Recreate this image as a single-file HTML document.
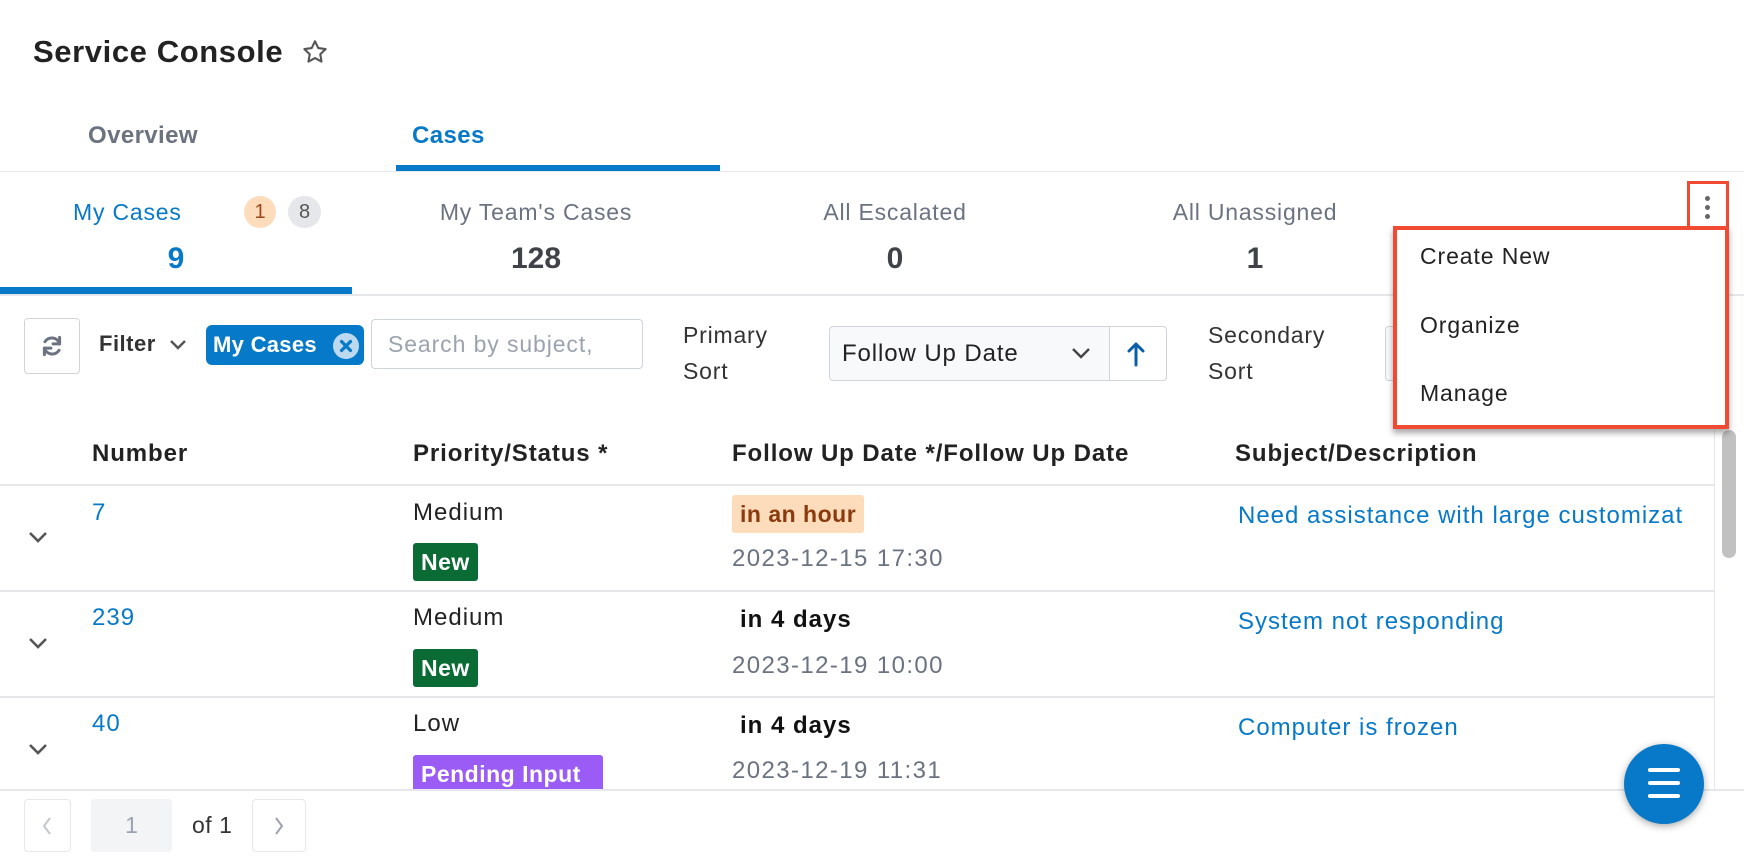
<!DOCTYPE html>
<html><head><meta charset="utf-8"><style>
*{margin:0;padding:0;box-sizing:border-box}
body{width:1744px;height:862px;background:#fff;font-family:"Liberation Sans",Arial,sans-serif;position:relative;overflow:hidden;color:#222}
.a{position:absolute;white-space:nowrap}
.hl{position:absolute;height:1px;background:#e5e7eb}
.lbl{font-size:23px;line-height:26px;color:#6b7280;letter-spacing:.8px}
.num{font-size:30px;line-height:34px;font-weight:bold;color:#3f4348}
.th{font-size:24px;font-weight:bold;line-height:28px;color:#222;letter-spacing:.9px}
.td{font-size:24px;line-height:28px;color:#222;letter-spacing:1px}
.blue{color:#0679c8}
.date{font-size:24px;line-height:28px;color:#6b7280;letter-spacing:1.4px}
.badge{position:absolute;color:#fff;font-weight:bold;font-size:23px;line-height:38px;padding:0 8px;border-radius:3px;letter-spacing:.5px}
.chev{position:absolute;left:28px;width:20px;height:12px}
.mi{font-size:23px;line-height:26px;color:#222;letter-spacing:.9px}
</style></head><body>

<div class="a" style="left:33px;top:33px;font-size:31px;line-height:38px;font-weight:bold;color:#222;letter-spacing:.6px">Service Console</div>
<svg class="a" style="left:301px;top:38px" width="28" height="28" viewBox="0 0 24 24"><path d="M12 2.8l2.8 5.8 6.3.9-4.6 4.4 1.1 6.3L12 17.2l-5.6 3 1.1-6.3-4.6-4.4 6.3-.9z" fill="none" stroke="#555" stroke-width="1.8" stroke-linejoin="round"/></svg>

<div class="a" style="left:88px;top:122px;font-size:24px;line-height:28px;font-weight:bold;color:#6b7280;letter-spacing:.4px">Overview</div>
<div class="a" style="left:412px;top:122px;font-size:24px;line-height:28px;font-weight:bold;color:#0679c8;letter-spacing:.4px">Cases</div>
<div class="hl" style="left:0;top:171px;width:1744px"></div>
<div class="a" style="left:396px;top:165px;width:324px;height:6px;background:#0679c8"></div>

<div class="a lbl" style="left:73px;top:199px;color:#0679c8">My Cases</div>
<div class="a" style="left:244px;top:196px;width:32px;height:32px;border-radius:16px;background:#fddcbc;color:#9a4a1a;font-size:20px;line-height:32px;text-align:center">1</div>
<div class="a" style="left:288px;top:196px;width:33px;height:32px;border-radius:16px;background:#e5e7eb;color:#555;font-size:20px;line-height:32px;text-align:center">8</div>
<div class="a num" style="left:126px;width:100px;text-align:center;top:242px;color:#0679c8">9</div>
<div class="a lbl" style="left:386px;width:300px;text-align:center;top:199px">My Team's Cases</div>
<div class="a num" style="left:486px;width:100px;text-align:center;top:242px">128</div>
<div class="a lbl" style="left:745px;width:300px;text-align:center;top:199px">All Escalated</div>
<div class="a num" style="left:845px;width:100px;text-align:center;top:242px">0</div>
<div class="a lbl" style="left:1105px;width:300px;text-align:center;top:199px">All Unassigned</div>
<div class="a num" style="left:1205px;width:100px;text-align:center;top:242px">1</div>
<div class="a" style="left:0;top:287px;width:352px;height:7px;background:#0679c8"></div>
<div class="hl" style="left:0;top:294px;width:1744px;height:2px"></div>

<!-- toolbar -->
<div class="a" style="left:24px;top:318px;width:56px;height:56px;border:1px solid #d1d5db;border-radius:4px"></div>
<svg class="a" style="left:39px;top:333px" width="26" height="26" viewBox="0 0 24 24" fill="none" stroke="#6b7280" stroke-width="2.8" stroke-linecap="round"><path d="M19 10A7.5 7.5 0 0 0 5.5 8"/><path d="M5 14a7.5 7.5 0 0 0 13.5 2"/><path d="M19 4v6h-6" stroke-linejoin="round"/><path d="M5 20v-6h6" stroke-linejoin="round"/></svg>
<div class="a" style="left:99px;top:331px;font-size:22px;line-height:26px;font-weight:bold;color:#333;letter-spacing:.5px">Filter</div>
<svg class="a" style="left:168px;top:338px" width="20" height="14" viewBox="0 0 20 14"><path d="M3 3l7 7 7-7" fill="none" stroke="#555" stroke-width="2.4"/></svg>
<div class="a" style="left:206px;top:325px;width:158px;height:40px;background:#0679c8;border-radius:6px"></div>
<div class="a" style="left:213px;top:332px;font-size:22px;line-height:26px;font-weight:bold;color:#fff;letter-spacing:.3px">My Cases</div>
<div class="a" style="left:333px;top:333px;width:26px;height:26px;border-radius:13px;background:#bcd9f0"></div>
<svg class="a" style="left:333px;top:333px" width="26" height="26" viewBox="0 0 26 26"><path d="M8.5 8.5l9 9M17.5 8.5l-9 9" stroke="#0679c8" stroke-width="3.2" stroke-linecap="round"/></svg>
<div class="a" style="left:371px;top:319px;width:272px;height:50px;border:1px solid #d1d5db;border-radius:4px"></div>
<div class="a" style="left:388px;top:330px;font-size:23px;line-height:28px;color:#9ca3af;letter-spacing:.9px">Search by subject,</div>
<div class="a" style="left:683px;top:317px;font-size:23px;line-height:36px;color:#333;letter-spacing:.8px">Primary<br>Sort</div>
<div class="a" style="left:829px;top:326px;width:338px;height:55px;border:1px solid #d1d5db;border-radius:4px;background:#f8f9fa"></div>
<div class="a" style="left:1109px;top:326px;width:58px;height:55px;border:1px solid #d1d5db;border-radius:0 4px 4px 0;background:#fff"></div>
<div class="a" style="left:842px;top:340px;font-size:24px;line-height:28px;color:#222;letter-spacing:.9px">Follow Up Date</div>
<svg class="a" style="left:1070px;top:346px" width="22" height="14" viewBox="0 0 22 14"><path d="M3 3l8 8 8-8" fill="none" stroke="#444" stroke-width="2.4"/></svg>
<svg class="a" style="left:1126px;top:341px" width="20" height="26" viewBox="0 0 20 26"><path d="M10 24V3M3 10l7-7 7 7" fill="none" stroke="#0a5fa8" stroke-width="3" stroke-linecap="round" stroke-linejoin="round"/></svg>
<div class="a" style="left:1208px;top:317px;font-size:23px;line-height:36px;color:#333;letter-spacing:.8px">Secondary<br>Sort</div>
<div class="a" style="left:1385px;top:326px;width:20px;height:55px;border:1px solid #d1d5db;border-radius:4px;background:#f8f9fa"></div>

<!-- table -->
<div class="a th" style="left:92px;top:440px">Number</div>
<div class="a th" style="left:413px;top:440px">Priority/Status *</div>
<div class="a th" style="left:732px;top:440px">Follow Up Date */Follow Up Date</div>
<div class="a th" style="left:1235px;top:440px">Subject/Description</div>
<div class="hl" style="left:0;top:484px;width:1714px;height:2px"></div>
<div class="hl" style="left:0;top:590px;width:1714px;height:2px"></div>
<div class="hl" style="left:0;top:696px;width:1714px;height:2px"></div>
<div class="hl" style="left:0;top:789px;width:1744px;height:2px"></div>

<svg class="chev" style="top:531px" viewBox="0 0 20 12"><path d="M2 2l8 8 8-8" fill="none" stroke="#555" stroke-width="2.6"/></svg>
<svg class="chev" style="top:637px" viewBox="0 0 20 12"><path d="M2 2l8 8 8-8" fill="none" stroke="#555" stroke-width="2.6"/></svg>
<svg class="chev" style="top:743px" viewBox="0 0 20 12"><path d="M2 2l8 8 8-8" fill="none" stroke="#555" stroke-width="2.6"/></svg>

<div class="a td blue" style="left:92px;top:499px">7</div>
<div class="a td" style="left:413px;top:499px">Medium</div>
<div class="badge" style="left:413px;top:543px;background:#0b6b34">New</div>
<div class="badge" style="left:732px;top:495px;background:#fddcbc;color:#8a3a0c">in an hour</div>
<div class="a date" style="left:732px;top:545px">2023-12-15 17:30</div>
<div class="a td blue" style="left:1238px;top:502px;width:476px;overflow:hidden">Need assistance with large customizat</div>

<div class="a td blue" style="left:92px;top:604px">239</div>
<div class="a td" style="left:413px;top:604px">Medium</div>
<div class="badge" style="left:413px;top:649px;background:#0b6b34">New</div>
<div class="a td" style="left:740px;top:606px;font-weight:bold;color:#111">in 4 days</div>
<div class="a date" style="left:732px;top:652px">2023-12-19 10:00</div>
<div class="a td blue" style="left:1238px;top:608px">System not responding</div>

<div class="a td blue" style="left:92px;top:710px">40</div>
<div class="a td" style="left:413px;top:710px">Low</div>
<div class="a" style="left:413px;top:755px;width:190px;height:34px;overflow:hidden"><div class="badge" style="left:0;top:0;background:#9b5cf6;width:190px">Pending Input</div></div>
<div class="a td" style="left:740px;top:712px;font-weight:bold;color:#111">in 4 days</div>
<div class="a date" style="left:732px;top:757px">2023-12-19 11:31</div>
<div class="a td blue" style="left:1238px;top:714px">Computer is frozen</div>

<!-- scrollbar -->
<div class="a" style="left:1714px;top:430px;width:1px;height:360px;background:#e5e7eb"></div>
<div class="a" style="left:1722px;top:430px;width:14px;height:128px;border-radius:7px;background:#c1c1c1"></div>

<!-- footer -->
<div class="a" style="left:24px;top:799px;width:47px;height:53px;border:1px solid #e5e7eb;border-radius:4px"></div>
<svg class="a" style="left:40px;top:815px" width="14" height="22" viewBox="0 0 14 22"><path d="M10 3l-6 8 6 8" fill="none" stroke="#c4c8cc" stroke-width="2"/></svg>
<div class="a" style="left:91px;top:799px;width:81px;height:53px;background:#f3f4f6;border-radius:3px;font-size:23px;line-height:53px;text-align:center;color:#9ca3af">1</div>
<div class="a" style="left:192px;top:811px;font-size:23px;line-height:28px;color:#333;letter-spacing:.5px">of 1</div>
<div class="a" style="left:252px;top:799px;width:54px;height:53px;border:1px solid #e5e7eb;border-radius:4px"></div>
<svg class="a" style="left:272px;top:815px" width="14" height="22" viewBox="0 0 14 22"><path d="M4 3l6 8-6 8" fill="none" stroke="#9ca3af" stroke-width="2"/></svg>

<div class="a" style="left:1624px;top:744px;width:80px;height:80px;border-radius:40px;background:#0878c8;box-shadow:0 2px 8px rgba(0,0,0,.35)"></div>
<div class="a" style="left:1648px;top:768px;width:32px;height:4px;border-radius:2px;background:#fff"></div>
<div class="a" style="left:1648px;top:781px;width:32px;height:4px;border-radius:2px;background:#fff"></div>
<div class="a" style="left:1648px;top:794px;width:32px;height:4px;border-radius:2px;background:#fff"></div>

<!-- kebab + menu -->
<div class="a" style="left:1705px;top:196px;width:5px;height:5px;border-radius:3px;background:#666"></div>
<div class="a" style="left:1705px;top:205px;width:5px;height:5px;border-radius:3px;background:#666"></div>
<div class="a" style="left:1705px;top:214px;width:5px;height:5px;border-radius:3px;background:#666"></div>
<div class="a" style="left:1687px;top:181px;width:42px;height:51px;border:3px solid #f04a33"></div>
<div class="a" style="left:1393px;top:226px;width:336px;height:203px;border:4px solid #f04a33;background:#fff;box-shadow:0 4px 6px rgba(0,0,0,.35)"></div>
<div class="a mi" style="left:1420px;top:243px">Create New</div>
<div class="a mi" style="left:1420px;top:312px">Organize</div>
<div class="a mi" style="left:1420px;top:380px">Manage</div>
</body></html>
